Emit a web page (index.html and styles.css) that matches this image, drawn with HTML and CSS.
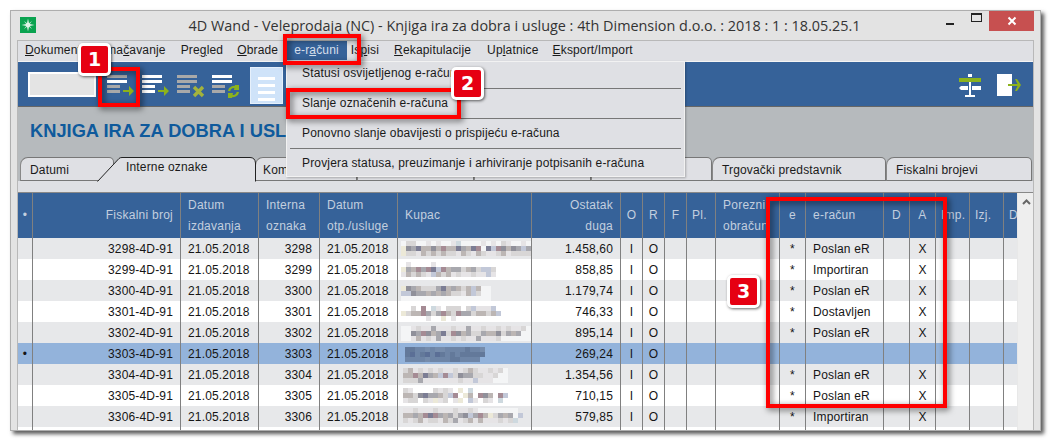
FILE: index.html
```html
<!DOCTYPE html>
<html lang="hr">
<head>
  <meta charset="UTF-8">
  <title>4D Wand - Veleprodaja</title>
  <link rel="stylesheet" href="styles.css">
</head>
<body>
  <div class="window">
    <!-- Naslovna traka -->
    <div class="titlebar">
      <svg class="app-icon" width="16" height="16" viewBox="0 0 16 16">
        <rect width="16" height="16" fill="#0aa350"/>
        <path d="M8 1.5 9 7 14.5 8 9 9 8 14.5 7 9 1.5 8 7 7Z" fill="#fff"/>
        <path d="M4 4 8 7 12 4 9 8 12 12 8 9 4 12 7 8Z" fill="#d8f5e4"/>
      </svg>
      <div class="title">4D Wand - Veleprodaja (NC) - Knjiga ira za dobra i usluge : 4th Dimension d.o.o. : 2018 : 1 : 18.05.25.1</div>
      <div class="win-btn win-min"><span></span></div>
      <div class="win-btn win-max"><span></span></div>
      <div class="win-btn win-close">
        <svg width="10" height="10" viewBox="0 0 10 10"><path d="M1.5 1.5 8.5 8.5M8.5 1.5 1.5 8.5" stroke="#fff" stroke-width="2"/></svg>
      </div>
    </div>

    <div class="frame">
      <!-- Izbornik -->
      <div class="menubar">
        <span class="menu-item m-dok"><u>D</u>okumenti</span>
        <span class="menu-item m-ozn">Ozna<u>č</u>avanje</span>
        <span class="menu-item">Pre<u>g</u>led</span>
        <span class="menu-item"><u>O</u>brade</span>
        <span class="menu-item menu-active">e-r<u>a</u>čuni</span>
        <span class="menu-item m-isp">Is<u>p</u>isi</span>
        <span class="menu-item m-rek"><u>R</u>ekapitulacije</span>
        <span class="menu-item">Up<u>l</u>atnice</span>
        <span class="menu-item"><u>E</u>ksport/Import</span>
      </div>

      <!-- Alatna traka -->
      <div class="toolbar">
        <div class="search-box"></div>
        <svg class="tool tool-first" width="28" height="24" viewBox="0 0 28 24">
          <rect x="0" y="1" width="20" height="3" fill="#a9a9a9"/>
          <rect x="0" y="6" width="20" height="3" fill="#fff"/>
          <rect x="0" y="11" width="13" height="3" fill="#a9a9a9"/>
          <rect x="0" y="16" width="13" height="3" fill="#a9a9a9"/>
          <path d="M16 16h6v-4l5 5-5 5v-4h-6Z" fill="#8cb21c"/>
        </svg>
        <svg class="tool" width="28" height="24" viewBox="0 0 28 24">
          <rect x="0" y="1" width="20" height="3" fill="#fff"/>
          <rect x="0" y="6" width="20" height="3" fill="#fff"/>
          <rect x="0" y="11" width="13" height="3" fill="#fff"/>
          <rect x="0" y="16" width="13" height="3" fill="#fff"/>
          <path d="M16 16h6v-4l5 5-5 5v-4h-6Z" fill="#8cb21c"/>
        </svg>
        <svg class="tool" width="28" height="24" viewBox="0 0 28 24">
          <rect x="0" y="1" width="20" height="3" fill="#a9a9a9"/>
          <rect x="0" y="6" width="20" height="3" fill="#a9a9a9"/>
          <rect x="0" y="11" width="13" height="3" fill="#a9a9a9"/>
          <rect x="0" y="16" width="13" height="3" fill="#a9a9a9"/>
          <path d="M17 13 26 22M26 13 17 22" stroke="#a3b33c" stroke-width="3.4"/>
        </svg>
        <svg class="tool" width="28" height="24" viewBox="0 0 28 24">
          <rect x="0" y="1" width="20" height="3" fill="#fff"/>
          <rect x="0" y="6" width="20" height="3" fill="#fff"/>
          <rect x="0" y="11" width="13" height="3" fill="#a9a9a9"/>
          <rect x="0" y="16" width="13" height="3" fill="#a9a9a9"/>
          <path d="M17 17a5 5 0 0 1 8-3M26 18a5 5 0 0 1-8 3" fill="none" stroke="#8cb21c" stroke-width="2.4"/>
          <path d="M23 11h4v5h-5ZM20 24h-4v-5h5Z" fill="#8cb21c"/>
        </svg>
        <div class="list-btn"><span></span><span></span><span></span><span></span></div>
        <svg class="tool tool-sign" width="22" height="24" viewBox="0 0 22 24">
          <rect x="9" y="0" width="4" height="3" fill="#fff"/>
          <rect x="0" y="4" width="22" height="4" fill="#8cb21c"/>
          <rect x="10" y="8" width="2" height="14" fill="#fff"/>
          <path d="M2 12h7v4H2L0 14ZM13 12h7l2 0v4h-9Z" fill="#fff"/>
          <rect x="6" y="21" width="10" height="2" fill="#fff"/>
        </svg>
        <svg class="tool tool-exit" width="25" height="24" viewBox="0 0 25 24">
          <rect x="0" y="0" width="15" height="22" fill="#fff"/>
          <rect x="11" y="10" width="10" height="2" fill="#8cb21c"/>
          <path d="M18 5h2l4 6-4 6h-2l3-6Z" fill="#8cb21c"/>
        </svg>
      </div>

      <div class="doc-head">
        <h1 class="doc-title">KNJIGA IRA ZA DOBRA I USL</h1>
        <div class="tabs">
          <div class="tab tab-datumi">Datumi</div>
          <div class="tab tab-active">
            <svg class="tab-shape" width="159" height="25" viewBox="0 0 159 25">
              <path d="M.5 24.5 22 1.5Q23 .5 25 .5H153Q158 .5 158.500 6V24.500Z" fill="#dfe0e4"/>
              <path d="M.5 24.500 22 1.500Q23 .5 25 .5H153Q158 .5 158.500 6V24.500" fill="none" stroke="#222"/>
            </svg>
            <span>Interne oznake</span>
          </div>
          <div class="tab tab-kom">Kom</div>
          <div class="tab tab-w117"></div>
          <div class="tab tab-w117"></div>
          <div class="tab tab-w121"></div>
          <div class="tab tab-trg">Trgovački predstavnik</div>
          <div class="tab tab-fisk">Fiskalni brojevi</div>
        </div>
      </div>
      <div class="tab-strip"></div>

      <!-- Tablica -->
      <div class="table-area">
        <table class="grid">
          <colgroup>
            <col class="c15"><col class="c148"><col class="c78"><col class="c61"><col class="c78"><col class="c134"><col class="c89"><col class="c22"><col class="c22"><col class="c22"><col class="c29"><col class="c64"><col class="c26"><col class="c78"><col class="c26"><col class="c26"><col class="c34"><col class="c34"><col class="c13">
          </colgroup>
          <thead>
            <tr>
              <th class="ctr">•</th><th class="num">Fiskalni broj</th><th>Datum<br>izdavanja</th><th>Interna<br>oznaka</th><th>Datum<br>otp./usluge</th><th>Kupac</th><th class="num">Ostatak<br>duga</th><th class="ctr">O</th><th class="ctr">R</th><th class="ctr">F</th><th class="tight">Pl.</th><th>Porezni<br>obračun</th><th class="ctr">e</th><th>e-račun</th><th class="ctr">D</th><th class="ctr">A</th><th class="tight">Imp.</th><th class="tight">Izj.</th><th class="tight">D</th>
            </tr>
          </thead>
          <tbody>
            <tr class="odd"><td></td><td class="num">3298-4D-91</td><td>21.05.2018</td><td class="num">3298</td><td>21.05.2018</td><td class="kupac"><canvas class="smudge" width="133" height="21"></canvas></td><td class="num">1.458,60</td><td class="ctr">I</td><td class="ctr">O</td><td></td><td></td><td></td><td class="ctr">*</td><td>Poslan eR</td><td></td><td class="ctr">X</td><td></td><td></td><td></td></tr>
            <tr><td></td><td class="num">3299-4D-91</td><td>21.05.2018</td><td class="num">3299</td><td>21.05.2018</td><td class="kupac"><canvas class="smudge" width="133" height="21"></canvas></td><td class="num">858,85</td><td class="ctr">I</td><td class="ctr">O</td><td></td><td></td><td></td><td class="ctr">*</td><td>Importiran</td><td></td><td class="ctr">X</td><td></td><td></td><td></td></tr>
            <tr class="odd"><td></td><td class="num">3300-4D-91</td><td>21.05.2018</td><td class="num">3300</td><td>21.05.2018</td><td class="kupac"><canvas class="smudge" width="133" height="21"></canvas></td><td class="num">1.179,74</td><td class="ctr">I</td><td class="ctr">O</td><td></td><td></td><td></td><td class="ctr">*</td><td>Poslan eR</td><td></td><td class="ctr">X</td><td></td><td></td><td></td></tr>
            <tr><td></td><td class="num">3301-4D-91</td><td>21.05.2018</td><td class="num">3301</td><td>21.05.2018</td><td class="kupac"><canvas class="smudge" width="133" height="21"></canvas></td><td class="num">746,33</td><td class="ctr">I</td><td class="ctr">O</td><td></td><td></td><td></td><td class="ctr">*</td><td>Dostavljen</td><td></td><td class="ctr">X</td><td></td><td></td><td></td></tr>
            <tr class="odd"><td></td><td class="num">3302-4D-91</td><td>21.05.2018</td><td class="num">3302</td><td>21.05.2018</td><td class="kupac"><canvas class="smudge" width="133" height="21"></canvas></td><td class="num">895,14</td><td class="ctr">I</td><td class="ctr">O</td><td></td><td></td><td></td><td class="ctr">*</td><td>Poslan eR</td><td></td><td class="ctr">X</td><td></td><td></td><td></td></tr>
            <tr class="selected"><td class="ctr">•</td><td class="num">3303-4D-91</td><td>21.05.2018</td><td class="num">3303</td><td>21.05.2018</td><td class="kupac"><canvas class="smudge" width="133" height="21"></canvas></td><td class="num">269,24</td><td class="ctr">I</td><td class="ctr">O</td><td></td><td></td><td></td><td></td><td></td><td></td><td></td><td></td><td></td><td></td></tr>
            <tr class="odd"><td></td><td class="num">3304-4D-91</td><td>21.05.2018</td><td class="num">3304</td><td>21.05.2018</td><td class="kupac"><canvas class="smudge" width="133" height="21"></canvas></td><td class="num">1.354,56</td><td class="ctr">I</td><td class="ctr">O</td><td></td><td></td><td></td><td class="ctr">*</td><td>Poslan eR</td><td></td><td class="ctr">X</td><td></td><td></td><td></td></tr>
            <tr><td></td><td class="num">3305-4D-91</td><td>21.05.2018</td><td class="num">3305</td><td>21.05.2018</td><td class="kupac"><canvas class="smudge" width="133" height="21"></canvas></td><td class="num">710,15</td><td class="ctr">I</td><td class="ctr">O</td><td></td><td></td><td></td><td class="ctr">*</td><td>Poslan eR</td><td></td><td class="ctr">X</td><td></td><td></td><td></td></tr>
            <tr class="odd"><td></td><td class="num">3306-4D-91</td><td>21.05.2018</td><td class="num">3306</td><td>21.05.2018</td><td class="kupac"><canvas class="smudge" width="133" height="21"></canvas></td><td class="num">579,85</td><td class="ctr">I</td><td class="ctr">O</td><td></td><td></td><td></td><td class="ctr">*</td><td>Importiran</td><td></td><td class="ctr">X</td><td></td><td></td><td></td></tr>
            <tr class="row-end"><td></td><td></td><td></td><td></td><td></td><td></td><td></td><td></td><td></td><td></td><td></td><td></td><td></td><td></td><td></td><td></td><td></td><td></td><td></td></tr>
          </tbody>
        </table>
        <div class="scrollbar">
          <svg width="9" height="6" viewBox="0 0 9 6"><path d="M1 5 4.500 1.500 8 5" fill="none" stroke="#666" stroke-width="2"/></svg>
        </div>
      </div>
    </div>
  </div>

  <!-- Padajuci izbornik -->
  <div class="dropdown">
    <div class="drop-item drop-first">Statusi osvijetljenog e-računa</div>
    <div class="drop-item">Slanje označenih e-računa</div>
    <div class="drop-item">Ponovno slanje obavijesti o prispijeću e-računa</div>
    <div class="drop-item">Provjera statusa, preuzimanje i arhiviranje potpisanih e-računa</div>
  </div>

  <!-- Oznake -->
  <div class="mark mark-tool"></div>
  <div class="mark mark-menu"></div>
  <div class="mark mark-send"></div>
  <div class="mark mark-cols"></div>
  <div class="badge badge-1">1</div>
  <div class="badge badge-2">2</div>
  <div class="badge badge-3">3</div>

  <script src="smudge.js"></script>
</body>
</html>
```

FILE: styles.css
```css
* {
  margin: 0;
  padding: 0;
  box-sizing: border-box;
}

body {
  width: 1052px;
  height: 442px;
  background: #fff;
  font-family: "Liberation Sans", Arial, sans-serif;
  font-size: 12px;
  letter-spacing: 0.16px;
  color: #111;
  overflow: hidden;
  padding: 10px 0 0 10px;
}

/* Prozor */
.window {
  width: 1031px;
  height: 421px;
  background: #e3e3e3;
  border: 1px solid #aeaeae;
  box-shadow: 3px 3px 4px rgba(0, 0, 0, 0.65);
  padding: 0 6px;
  display: flex;
  flex-direction: column;
  overflow: hidden;
}

.titlebar {
  height: 29px;
  flex: none;
  display: flex;
  align-items: flex-start;
  margin: 0 -6px;
  padding-left: 9px;
}

.app-icon {
  margin-top: 6px;
  flex: none;
}

.title {
  flex: 1;
  text-align: center;
  font-family: "Open Sans", sans-serif;
  font-size: 14.4px;
  letter-spacing: 0;
  line-height: 29px;
  color: #333;
  white-space: nowrap;
  padding-left: 76px;
}

.win-btn {
  height: 20px;
  flex: none;
  display: flex;
  align-items: center;
  justify-content: center;
}

.win-min {
  width: 26px;
}

.win-min span {
  display: block;
  width: 8px;
  height: 2px;
  background: #222;
  margin-top: 5px;
}

.win-max {
  width: 26px;
}

.win-max span {
  display: block;
  width: 11px;
  height: 9px;
  border: 1px solid #222;
  border-top-width: 2px;
  margin-top: -7px;
}

.win-close {
  width: 45px;
  background: #c75050;
  margin-right: 6px;
}

.frame {
  flex: 1;
  min-height: 0;
  border: 1px solid #b8b8b8;
  border-bottom: 0;
  display: flex;
  flex-direction: column;
}

/* Izbornik */
.menubar {
  height: 20px;
  flex: none;
  background: #dfe0e4;
  display: flex;
  align-items: stretch;
}

.menu-item {
  padding: 0 7px;
  line-height: 19px;
  white-space: nowrap;
  color: #1a1a1a;
}

.m-dok {
  margin-right: -4px;
}

.m-ozn {
  margin-right: 1px;
}

.m-isp {
  margin-right: 1px;
}

.m-rek {
  margin-right: 2px;
}

.menu-active {
  background: #366299;
  color: #d6dfeb;
  padding: 0 8px;
  margin: 0 -3px 0 1px;
  height: 19px;
}

/* Alatna traka */
.toolbar {
  height: 46px;
  flex: none;
  background: #366299;
  border-top: 1px solid #f4f4f4;
  border-bottom: 1px solid #666;
  display: flex;
  align-items: flex-start;
  padding-left: 10px;
}

.search-box {
  width: 68px;
  height: 25px;
  margin-top: 10px;
  background: #e4e4e4;
  border: 2px solid #fff;
}

.tool {
  flex: none;
  margin: 12px 0 0 7px;
}

.tool-first {
  margin-left: 11px;
}

.list-btn {
  width: 33px;
  height: 37px;
  margin: 5px 0 0 10px;
  background: #cfe3f9;
  border: 1px solid #e6f0fb;
  display: flex;
  flex-direction: column;
  gap: 4px;
  padding: 9px 7px 0;
}

.list-btn span {
  display: block;
  height: 3px;
  background: #fff;
}

.tool-sign {
  margin-left: auto;
}

.tool-exit {
  margin-left: 16px;
  margin-right: 11px;
  margin-top: 12px;
}

/* Naslov i kartice */
.doc-head {
  height: 74px;
  flex: none;
  background: #b6babd;
  display: flex;
  flex-direction: column;
  justify-content: space-between;
  position: relative;
}

.doc-title {
  font-size: 18.300px;
  font-weight: bold;
  letter-spacing: 0;
  color: #0f5a9c;
  padding: 13px 0 0 12px;
  line-height: 22px;
  white-space: nowrap;
}

.tabs {
  height: 24px;
  display: flex;
  padding-left: 2px;
}

.tab {
  flex: none;
  height: 24px;
  background: #dfe0e4;
  border: 1px solid #777;
  border-bottom: 1px solid #777;
  border-left-color: #888;
  border-radius: 8px 5px 0 0;
  padding-left: 9px;
  line-height: 24px;
  color: #1a1a1a;
  white-space: nowrap;
  position: relative;
}

.tab-datumi {
  width: 94px;
  margin-right: -17px;
}

.tab-active {
  width: 159px;
  background: none;
  border: 0;
  height: 25px;
  padding-left: 29px;
  line-height: 21px;
  margin-bottom: -1px;
  z-index: 2;
}

.tab-active span {
  position: relative;
}

.tab-shape {
  position: absolute;
  left: 0;
  top: 0;
}

.tab-kom {
  width: 102px;
  padding-left: 7px;
  margin-left: -1px;
}

.tab-w117 {
  width: 117px;
}

.tab-w121 {
  width: 121px;
}

.tab-trg {
  width: 174px;
}

.tab-fisk {
  width: 146px;
}

.tab-strip {
  height: 12px;
  flex: none;
  background: #dfe0e4;
  border-bottom: 1px solid #888;
}

/* Tablica */
.table-area {
  flex: 1;
  min-height: 0;
  display: flex;
  background: #eee;
  overflow: hidden;
}

.grid {
  width: 999px;
  flex: none;
  table-layout: fixed;
  border-collapse: separate;
  border-spacing: 0;
  background: #fff;
  align-self: flex-start;
}

.c13 { width: 13px; }
.c15 { width: 15px; }
.c22 { width: 22px; }
.c26 { width: 26px; }
.c29 { width: 29px; }
.c34 { width: 34px; }
.c61 { width: 61px; }
.c64 { width: 64px; }
.c78 { width: 78px; }
.c89 { width: 89px; }
.c134 { width: 134px; }
.c148 { width: 148px; }

.grid th,
.grid td {
  border-right: 1px solid #808080;
  overflow: hidden;
  white-space: nowrap;
  text-align: left;
  padding: 0 7px;
}

.grid th:last-child,
.grid td:last-child {
  border-right: 0;
}

.grid th {
  height: 45px;
  background: #366299;
  color: #c3cfdf;
  font-weight: normal;
  letter-spacing: 0.25px;
  line-height: 21px;
}

.grid td {
  height: 21px;
  line-height: 20px;
  color: #151515;
}

.grid .num {
  text-align: right;
}

.grid .ctr {
  text-align: center;
  padding: 0;
}

.grid .tight {
  padding: 0 0 0 5px;
  overflow: hidden;
}

.grid .kupac {
  padding: 0;
}

.odd td {
  background: #e7e8ea;
}

.selected td {
  background: #93b3db;
}

.selected .smudge {
  mix-blend-mode: multiply;
  opacity: 0.75;
}

.row-end td {
  height: 4px;
  line-height: 0;
}

.smudge {
  display: block;
  filter: blur(0.4px);
}

.scrollbar {
  flex: 1;
  padding: 6px 0 0 4px;
  border-left: 1px solid #e8e8e8;
}

.scrollbar svg {
  display: block;
}

/* Padajuci izbornik */
.dropdown {
  position: absolute;
  left: 286px;
  top: 61px;
  width: 399px;
  height: 116px;
  background: #dfe0e4;
  border: 1px solid #f2f2f2;
  box-shadow: 1px 1px 2px rgba(0, 0, 0, 0.25);
  padding: 0 3px;
}

.drop-item {
  height: 30px;
  line-height: 29px;
  padding-left: 12px;
  border-bottom: 1px solid #777;
  white-space: nowrap;
  color: #1a1a1a;
}

.drop-first {
  height: 27px;
  line-height: 23px;
}

.drop-item:last-child {
  border-bottom: 0;
}

/* Oznake */
.mark {
  position: absolute;
  border: 4px solid #f00;
  filter: drop-shadow(2px 2px 3px rgba(0, 0, 0, 0.6));
}

.mark-tool { left: 98px; top: 67px; width: 42px; height: 40px; }
.mark-menu { left: 283px; top: 34px; width: 78px; height: 31px; }
.mark-send { left: 286px; top: 88px; width: 175px; height: 31px; }
.mark-cols { left: 766px; top: 197px; width: 181px; height: 211px; }

.badge {
  position: absolute;
  width: 33px;
  height: 33px;
  background: #e60012;
  border: 3px solid #fff;
  border-radius: 5px;
  box-shadow: 1px 1px 3px rgba(0, 0, 0, 0.6);
  color: #fff;
  font-family: "DejaVu Sans", sans-serif;
  font-weight: bold;
  font-size: 19px;
  letter-spacing: 0;
  line-height: 26px;
  text-align: center;
}

.badge-1 { left: 78px; top: 43px; }
.badge-2 { left: 451px; top: 67px; }
.badge-3 { left: 727px; top: 275px; }
```

FILE: smudge.js
```js
// Zamucena imena kupaca: tri trake piksela po retku
const palette = {
  a: "#ece9d8", l: "#d8d6d6", L: "#e6e4e6", m: "#bcb6b4", n: "#a8a8ae",
  d: "#90909a", v: "#7c7d94", p: "#a58b94", b: "#c2c8d8", c: "#ced9df"
};

const rows = [
  { x: 3, y: 3, halo: 130, strips: [" ll  L L  Lc    L L lL  L", "adnvmmdmpmmvnmvp vbpdmdnbnm", "allLmlmlmllLmlLmlLLlmLllll"] },
  { x: 3, y: 3, halo: 90, strips: [" L    L            ", "anmpnpvbpmnnlmnlbbl", "LmlmlLbmlmLlLLlLLbL"] },
  { x: 3, y: 6, halo: 90, strips: ["adnmlllnvmnmlmbm", "bbdnnmnmnmllLmbl", ""] },
  { x: 3, y: 5, halo: 105, strips: ["  l p cL lll lbLLLb", "almmpnlnpmlpnnlmmlmb", "     L  a L"] },
  { x: 3, y: 4, halo: 130, strips: ["  LlLLnLLLlLLnLLlLLlLlLLl", "  dnpdmnvlpdmnllnmmdlnmn", "  LmLlLnLLlLlLLnLLLl"] },
  { x: 7, y: 4, strips: ["ddnnmnmmnnnndnnm", "dvndvnvdndnddddd", "nnnnmnnnnddnnnn"] },
  { x: 5, y: 4, halo: 105, strips: ["lmLlLlLlLLlLlmlLLlLl", "mmpmvnmbpbldnnllLLl", "lllnLLLLLLLlLLbLLL"] },
  { x: 5, y: 3, halo: 85, strips: ["lL    lLlL a c", "mmldvnnmlbp am pdm pb", "Lll lLaLl La bL lL c"] },
  { x: 5, y: 2, halo: 115, strips: ["LLlLLLlLLLlLLlL", "mmnmpvpnmnlndbnpmalnmn b", "lLlmLllLmlnLlmLmLLLlLlc"] }
];

document.querySelectorAll(".smudge").forEach((canvas, i) => {
  const ctx = canvas.getContext("2d");
  const row = rows[i];
  if (row.halo) {
    ctx.fillStyle = "rgba(255, 255, 255, 0.55)";
    ctx.fillRect(row.x, row.y, row.halo, 15);
  }
  row.strips.forEach((strip, s) => {
    [...strip].forEach((ch, c) => {
      if (!palette[ch]) return;
      ctx.fillStyle = palette[ch];
      ctx.fillRect(row.x + c * 5, row.y + s * 5, 5, 5);
    });
  });
});
```
